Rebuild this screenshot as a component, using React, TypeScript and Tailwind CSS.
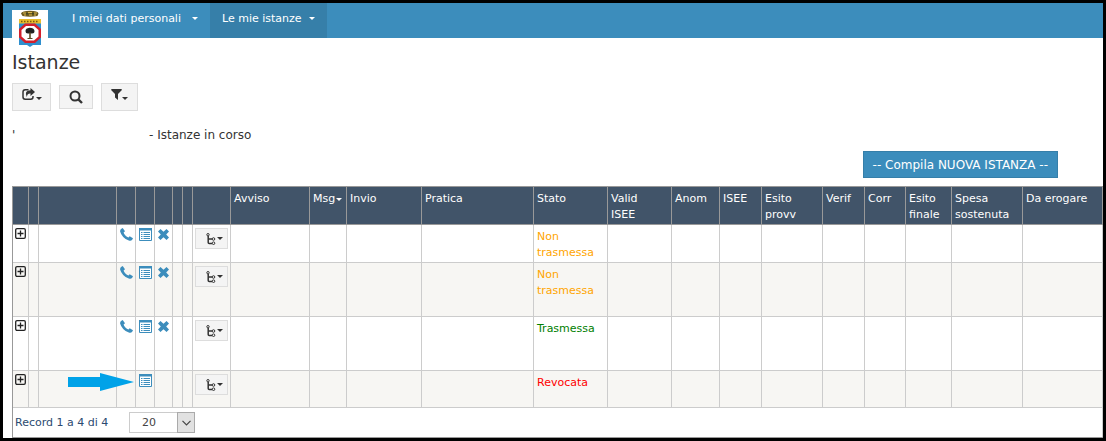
import React from "react";

type Status = "Non trasmessa" | "Trasmessa" | "Revocata";

interface Application {
  id: number;
  status: Status;
  editable: boolean;
  height: string;
}

const applications: Application[] = [
  { id: 1, status: "Non trasmessa", editable: true, height: "h-[38px]" },
  { id: 2, status: "Non trasmessa", editable: true, height: "h-[54px]" },
  { id: 3, status: "Trasmessa", editable: true, height: "h-[54px]" },
  { id: 4, status: "Revocata", editable: false, height: "h-[37px]" },
];

const statusColor: Record<Status, string> = {
  "Non trasmessa": "text-[#ffa500]",
  Trasmessa: "text-[#008000]",
  Revocata: "text-[#ff0000]",
};

const columns: { label: string; width: number; sorted?: boolean }[] = [
  { label: "", width: 16 },
  { label: "", width: 10 },
  { label: "", width: 78 },
  { label: "", width: 19 },
  { label: "", width: 19 },
  { label: "", width: 18 },
  { label: "", width: 10 },
  { label: "", width: 10 },
  { label: "", width: 38 },
  { label: "Avviso", width: 79 },
  { label: "Msg", width: 37, sorted: true },
  { label: "Invio", width: 75 },
  { label: "Pratica", width: 112 },
  { label: "Stato", width: 74 },
  { label: "Valid ISEE", width: 64 },
  { label: "Anom", width: 48 },
  { label: "ISEE", width: 42 },
  { label: "Esito provv", width: 61 },
  { label: "Verif", width: 42 },
  { label: "Corr", width: 41 },
  { label: "Esito finale", width: 46 },
  { label: "Spesa sostenuta", width: 71 },
  { label: "Da erogare", width: 80 },
];

function Caret() {
  return (
    <svg width="6" height="3" viewBox="0 0 6 3" fill="currentColor" className="shrink-0" aria-hidden="true">
      <path d="M0 0h6L3 3z" />
    </svg>
  );
}

function Crest() {
  return (
    <svg width="36" height="38" viewBox="0 0 36 38" className="block" role="img" aria-label="Regione Puglia">
      <path d="M0 0h36v38H0z" fill="#fff" />
      <path d="M9 3.5Q10 1 18 .8 26 1 26.500 3.500L25.500 6Q18 7.500 10.500 6z" fill="#6e5a20" />
      <path d="M11 3h3M16 2.500h4M22 3h3M12 5h2M17 5h3M22 5h2" stroke="#d9b84e" strokeWidth="1" />
      <path d="M14 3.800h2M20 3.800h2" stroke="#2f3d22" strokeWidth="1" />
      <path d="M7 9h22v5H7z" fill="#e9bd2c" />
      <path d="M9 11.500h18" stroke="#7a5a12" strokeWidth="1.400" strokeDasharray="1.500 1.500" />
      <path d="M7 13.500h22v21.500h-8l-3 2-3-2H7z" fill="#2e8fce" />
      <path d="M13 13.500h10l6 5.500v8.500l-6 5.500H13l-6-5.500V19z" fill="#d31f2b" />
      <path d="M14 16h8l4.500 4v6.500l-4.500 4h-8l-4.500-4V20z" fill="#fff" />
      <path d="M13.500 21q0-2.800 4-3.300 4.500 0 5 3.300 0 2.500-2.500 2.500h-4q-2.500 0-2.500-2.500z" fill="#222" />
      <path d="M17.200 22.500h1.600v5.500h1.700v1h-5v-1h1.700z" fill="#5c4a25" />
    </svg>
  );
}

function ShareIcon() {
  return (
    <svg width="14" height="12" viewBox="0 0 14 12" aria-hidden="true">
      <path d="M6.500 1.800H3.200Q1 1.800 1 4V9Q1 11.200 3.200 11.200H8.800Q11 11.200 11 9V8" fill="none" stroke="currentColor" strokeWidth="1.500" />
      <path d="M8.500 0L13 4 8.500 8V5.600Q5.300 5.400 4.800 9 1.800 2.600 8.500 2.300z" fill="currentColor" />
    </svg>
  );
}

function SearchIcon() {
  return (
    <svg width="14" height="14" viewBox="0 0 14 14" fill="none" stroke="currentColor" aria-hidden="true">
      <circle cx="6" cy="6" r="4.500" strokeWidth="2" />
      <path d="M9.300 9.300L13 13" strokeWidth="2.400" />
    </svg>
  );
}

function FilterIcon() {
  return (
    <svg width="11" height="11" viewBox="0 0 11 11" fill="currentColor" aria-hidden="true">
      <path d="M.3 0h10.400v1.200L7 5v6L4 8.600V5L.3 1.200z" />
    </svg>
  );
}

function ExpandIcon() {
  return (
    <svg width="11" height="11" viewBox="0 0 11 11" fill="none" stroke="currentColor" aria-hidden="true">
      <rect x=".7" y=".7" width="9.600" height="9.600" rx="1.300" strokeWidth="1.300" />
      <path d="M5.500 2.500v6M2.500 5.500h6" strokeWidth="1.300" />
    </svg>
  );
}

function PhoneIcon() {
  return (
    <svg width="13" height="13" viewBox="0 0 13 13" fill="currentColor" aria-hidden="true">
      <path d="M1.400.8L2.700.1 5 3.300 3.600 4.500Q4 6.200 5.400 7.600 6.800 9 8.500 9.600L9.700 8.300 13 10.300 12.200 11.800Q11 13.200 8.800 12.500 5.500 11.400 3.200 8.900.7 6.200.1 3.600-.1 1.800 1.400.8z" />
    </svg>
  );
}

function ListIcon() {
  return (
    <svg width="13" height="13" viewBox="0 0 13 13" aria-hidden="true">
      <path d="M.5.500h12v12H.5z" fill="#fff" stroke="currentColor" />
      <path d="M0 0h13v2.500H0z" fill="currentColor" />
      <path d="M2 4.500h1.500M4.500 4.500h6.500M2 6.500h1.500M4.500 6.500h6.500M2 8.500h1.500M4.500 8.500h6.500M2 10.500h1.500M4.500 10.500h6.500" stroke="currentColor" strokeWidth="1.200" />
    </svg>
  );
}

function RemoveIcon() {
  return (
    <svg width="11" height="11" viewBox="0 0 11 11" fill="currentColor" aria-hidden="true">
      <path d="M2.500 0L5.500 2.800 8.500 0 11 2.500 8.200 5.500 11 8.500 8.500 11 5.500 8.200 2.500 11 0 8.500 2.800 5.500 0 2.500z" />
    </svg>
  );
}

function TreeIcon() {
  return (
    <svg width="10" height="12" viewBox="0 0 10 12" fill="none" stroke="currentColor" aria-hidden="true">
      <circle cx="2" cy="1.700" r="1.200" />
      <path d="M2.200 3v6.500Q2.200 10.500 3.200 10.500H6M2 6H6" strokeWidth="1.500" />
      <circle cx="7.500" cy="6" r="1.300" />
      <circle cx="7.500" cy="10.200" r="1.300" />
    </svg>
  );
}

function NavItem({ label, width, active = false }: { label: string; width: string; active?: boolean }) {
  return (
    <a
      href="#"
      className={`flex items-center justify-between px-3 pb-1 whitespace-nowrap text-white ${width} ${active ? "bg-[#367fa9]" : ""}`}
      aria-current={active ? "page" : undefined}
    >
      {label}
      <Caret />
    </a>
  );
}

function IconLink({ label, children }: { label: string; children: React.ReactNode }) {
  return (
    <a href="#" aria-label={label} className="flex justify-center text-[#3c8dbc]">
      {children}
    </a>
  );
}

const cell = "border-r border-b border-[#ccc] align-top";

function Row({ item, striped }: { item: Application; striped: boolean }) {
  return (
    <tr className={`${item.height} ${striped ? "bg-[#f7f6f3]" : "bg-white"}`}>
      <td className={`${cell} pt-[3px]`}>
        <button type="button" aria-label="Espandi" className="mx-auto block text-[#222]">
          <ExpandIcon />
        </button>
      </td>
      <td className={cell} />
      <td className={cell} />
      <td className={`${cell} pt-[3px]`}>
        {item.editable && <IconLink label="Contatti"><PhoneIcon /></IconLink>}
      </td>
      <td className={`${cell} relative pt-[3px]`}>
        <IconLink label="Dettaglio"><ListIcon /></IconLink>
        {!item.editable && (
          <svg width="66" height="18" viewBox="0 0 66 18" className="absolute top-[2px] right-full mr-[2px] max-w-none" aria-hidden="true">
            <path d="M0 4h32V0l34 9-34 9v-4H0z" fill="#00a2e8" />
          </svg>
        )}
      </td>
      <td className={`${cell} pt-1`}>
        {item.editable && <IconLink label="Elimina"><RemoveIcon /></IconLink>}
      </td>
      <td className={cell} />
      <td className={cell} />
      <td className={`${cell} px-[2px] pt-[3px]`}>
        <button
          type="button"
          aria-label="Azioni"
          className="flex h-[21px] w-full items-center justify-end gap-px border border-[#ddd] bg-[#f4f4f4] pr-1 text-[#333]"
        >
          <TreeIcon />
          <Caret />
        </button>
      </td>
      {columns.slice(9).map((column) => (
        <td key={column.label} className={`${cell} pt-1 pl-[3px]`}>
          {column.label === "Stato" && <span className={statusColor[item.status]}>{item.status}</span>}
        </td>
      ))}
    </tr>
  );
}

const toolButton = "flex justify-center border border-[#ddd] bg-[#f4f4f4] text-[#333]";

export default function App() {
  return (
    <div className="min-h-screen border-3 border-black bg-white font-['DejaVu_Sans',Verdana,sans-serif] text-[11px] leading-4 text-[#333]">
      <nav className="flex h-[35px] bg-[#3c8dbc] pl-[9px]">
        <a href="#" className="mt-[7px] mr-3 h-[38px] w-9 shrink-0">
          <Crest />
        </a>
        <NavItem label="I miei dati personali" width="w-[150px]" />
        <NavItem label="Le mie istanze" width="w-[117px]" active />
      </nav>

      <main className="pl-[9px]">
        <h1 className="pt-3 text-[19px] leading-6">Istanze</h1>

        <div className="mt-[9px] flex items-center gap-2">
          <button type="button" aria-label="Esporta" className={`${toolButton} h-7 w-[39px] items-end pb-[10px]`}>
            <ShareIcon />
            <Caret />
          </button>
          <button type="button" aria-label="Cerca" className={`${toolButton} h-6 w-[34px] items-center`}>
            <SearchIcon />
          </button>
          <button type="button" aria-label="Filtra" className={`${toolButton} h-7 w-[37px] items-end pb-[10px]`}>
            <FilterIcon />
            <Caret />
          </button>
        </div>

        <div className="mt-4 flex text-xs leading-4">
          <span className="w-[137px]">'</span>
          <span>- Istanze in corso</span>
        </div>

        <div className="mt-2 mr-[45px] flex justify-end">
          <button type="button" className="h-[27px] border border-[#367fa9] bg-[#3c8dbc] px-[9px] text-xs text-white">
            -- Compila NUOVA ISTANZA --
          </button>
        </div>

        <section className="mt-2 border-b border-l border-[#999]">
          <table className="w-full table-fixed border-separate border-spacing-0 border-t border-[#999]">
            <colgroup>
              {columns.map((column, index) => (
                <col key={index} style={{ width: column.width }} />
              ))}
            </colgroup>
            <thead>
              <tr className="h-[38px] bg-[#415469] text-left text-white">
                {columns.map((column, index) => (
                  <th
                    key={index}
                    className={`border-r border-b border-[#999] pt-1 pl-[3px] align-top font-normal ${column.label && !column.sorted ? "pr-2" : ""}`}
                  >
                    {column.sorted ? (
                      <span className="flex items-center gap-px">
                        {column.label}
                        <Caret />
                      </span>
                    ) : (
                      column.label
                    )}
                  </th>
                ))}
              </tr>
            </thead>
            <tbody>
              {applications.map((item, index) => (
                <Row key={item.id} item={item} striped={index % 2 === 1} />
              ))}
            </tbody>
          </table>

          <footer className="flex h-[29px] items-center border-r border-[#ccc] pl-[2px] text-[#2c4a70]">
            <span className="w-[114px]">Record 1 a 4 di 4</span>
            <div className="relative">
              <select
                aria-label="Record per pagina"
                defaultValue="20"
                className="block h-[21px] w-[66px] appearance-none border border-[#ccc] bg-white pl-3 text-[#444]"
              >
                <option>10</option>
                <option>20</option>
                <option>50</option>
              </select>
              <span className="pointer-events-none absolute top-0 right-0 flex h-[21px] w-[18px] items-center justify-center border border-[#aaa] bg-[#e1e1e1] text-[#444]">
                <svg width="9" height="6" viewBox="0 0 9 6" fill="none" stroke="currentColor" aria-hidden="true">
                  <path d="M.5.800l4 4 4-4" strokeWidth="1.200" />
                </svg>
              </span>
            </div>
          </footer>
        </section>
      </main>
    </div>
  );
}
